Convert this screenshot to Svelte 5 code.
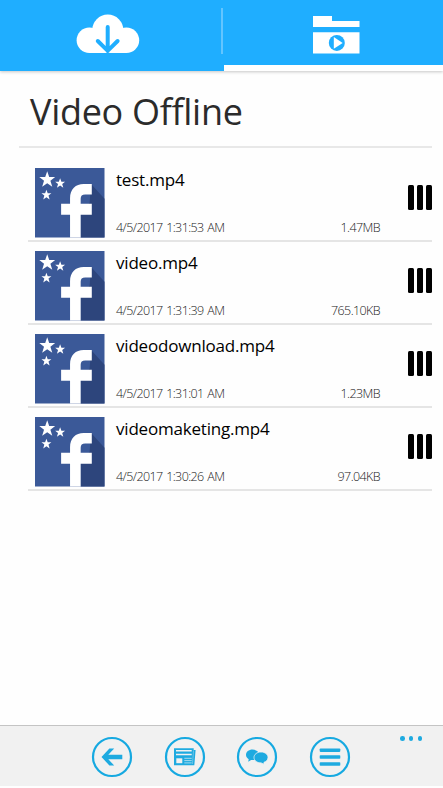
<script>
  let tab = $state('folder');
  let selected = $state(null);

  const files = [
    { name: 'test.mp4', date: '4/5/2017 1:31:53 AM', size: '1.47MB' },
    { name: 'video.mp4', date: '4/5/2017 1:31:39 AM', size: '765.10KB' },
    { name: 'videodownload.mp4', date: '4/5/2017 1:31:01 AM', size: '1.23MB' },
    { name: 'videomaketing.mp4', date: '4/5/2017 1:30:26 AM', size: '97.04KB' }
  ];
</script>

{#snippet thumb()}
  <svg class="thumb" width="70" height="70" viewBox="0 0 70 70" aria-hidden="true">
    <rect width="70" height="70" fill="#3b5998" />
    <path d="M56.5 16 70 31V70H46V47L55 35Z" fill="#2d457c" />
    <path d="M35.3 70V47H26.3V36H35.3V30.5C35.3 21 41 16 49 16H57.2V26.8H50.5C47.3 26.8 46 28.3 46 31V36H57.2V47H46V70Z" fill="#fff" />
    <path d="M12.3 3.2 14.3 9H20.3L15.5 12.8 17.4 19 12.3 15.3 7.2 19 9.1 12.8 4.3 9H10.3Z" fill="#fff" />
    <path d="M25.3 10.3 26.6 13.8H30.3L27.4 16.1 28.5 20 25.3 17.7 22.1 20 23.2 16.1 20.3 13.8H24Z" fill="#fff" />
    <path d="M11.5 22 12.8 25.5H16.5L13.6 27.8 14.7 31.7 11.5 29.4 8.3 31.7 9.4 27.8 6.5 25.5H10.2Z" fill="#fff" />
  </svg>
{/snippet}

<div class="app">
  <header class="tabs">
    <button class="tab" class:active={tab === 'cloud'} aria-label="Download" onclick={() => (tab = 'cloud')}>
      <svg class="cloud" width="64" height="40" viewBox="0 0 64 40">
        <g fill="#fff">
          <circle cx="13.4" cy="26.2" r="12.8" />
          <circle cx="31.8" cy="16.2" r="15.6" />
          <circle cx="50.4" cy="26.2" r="12.8" />
          <rect x="13.4" y="20" width="37" height="19" />
        </g>
        <path d="M31.7 13V37M21.8 27 31.7 36.8 41.6 27" fill="none" stroke="#1faeff" stroke-width="4" stroke-linecap="round" />
      </svg>
    </button>
    <button class="tab" class:active={tab === 'folder'} aria-label="Offline videos" onclick={() => (tab = 'folder')}>
      <svg class="folder" width="47" height="38" viewBox="0 0 47 38">
        <path d="M0 0H19V5H46.5V11H0Z" fill="#fff" />
        <path d="M0 16.3H46.5V37.5H0Z" fill="#fff" />
        <circle cx="23.8" cy="26.9" r="8" fill="#1faeff" />
        <path d="M20.8 21 29.7 26.9 20.8 32.8Z" fill="#fff" />
      </svg>
    </button>
  </header>

  <main>
    <h1>Video Offline</h1>
    <ul>
      {#each files as file}
        <li>
          {@render thumb()}
          <div class="info">
            <span class="name">{file.name}</span>
            <div class="meta">
              <span>{file.date}</span>
              <span class="size">{file.size}</span>
            </div>
          </div>
          <button class="more" aria-label="Options" onclick={() => (selected = file.name)}>
            <i></i><i></i><i></i>
          </button>
        </li>
      {/each}
    </ul>
  </main>

  <footer>
    <nav>
      <button aria-label="Back">
        <svg width="42" height="42" viewBox="0 0 42 42">
          <circle class="ring" cx="21" cy="21" r="19" />
          <path d="M10.5 21 18.4 12.5H23.2L17.3 18.8H31.3V23.2H17.3L23.2 29.5H18.4Z" />
        </svg>
      </button>
      <button aria-label="News">
        <svg width="42" height="42" viewBox="0 0 42 42">
          <circle class="ring" cx="21" cy="21" r="19" />
          <path d="M10 12.3H29.7V14H31.6L30.3 29.3H10Z" />
          <path d="M12 14.8H27.7M12 18.5H27.7" stroke="#f1f1f1" stroke-width="1.4" />
          <path d="M12.3 22.3H18.3V27.2H12.3Z" fill="#f1f1f1" />
          <path d="M20.3 22.3H27.7M20.3 24.6H27.7M20.3 26.9H27.7" stroke="#a5daee" stroke-width="1" />
          <path d="M29.5 14.5 28.5 28" stroke="#8bd0ea" stroke-width=".7" />
        </svg>
      </button>
      <button aria-label="Comments">
        <svg width="42" height="42" viewBox="0 0 42 42">
          <circle class="ring" cx="21" cy="21" r="19" />
          <path d="M16.5 13.5C12.8 13.5 10 15.8 10 18.8C10 20.8 11 22.3 12.7 23.2L12.2 25.7L15.1 24.1H19.5C22 23.4 23.2 21 23.2 18.8C23.2 15.8 20.2 13.5 16.5 13.5Z" />
          <path d="M25 16C20.9 16 18 18.4 18 21.5C18 24.7 21 26.9 25.2 26.9L27.8 28.2L28 26.3C30.5 25.5 32 23.8 32 21.5C32 18.4 29.1 16 25 16Z" stroke="#f1f1f1" stroke-width=".8" />
        </svg>
      </button>
      <button aria-label="Menu">
        <svg width="42" height="42" viewBox="0 0 42 42">
          <circle class="ring" cx="21" cy="21" r="19" />
          <rect x="10.7" y="12.4" width="20.6" height="3.5" rx=".8" />
          <rect x="10.7" y="19.3" width="20.6" height="3.5" rx=".8" />
          <rect x="10.7" y="26.2" width="20.6" height="3.5" rx=".8" />
        </svg>
      </button>
    </nav>
    <div class="dots"><i></i><i></i><i></i></div>
  </footer>
</div>

<style>
  :global(body) { margin: 0; background: #fff; }
  * { box-sizing: border-box; }
  .app {
    display: flex;
    flex-direction: column;
    width: 443px;
    height: 788px;
    overflow: hidden;
    padding-bottom: 2px;
    background: #fefefe;
    font-family: "Open Sans", "Noto Sans", sans-serif;
  }
  button { padding: 0; border: 0; background: none; cursor: pointer; }
  svg { display: block; }

  .tabs {
    display: flex;
    flex: none;
    height: 71px;
    background: #1faeff;
    box-shadow: 0 1px 3px rgba(0, 0, 0, .22);
  }
  .tab { display: flex; position: relative; width: 219px; border-bottom: 6px solid transparent; }
  .tab:first-child { width: 224px; }
  .tab:first-child::after {
    content: "";
    position: absolute;
    left: 221px;
    top: 8px;
    width: 2px;
    height: 46px;
    background: #63c5ff;
  }
  .tab.active { border-color: #fff; }
  .cloud { margin: 14px 0 0 76px; }
  .folder { margin: 15.5px 0 0 88.7px; }

  main { flex: 1; padding: 0 11px 0 19px; }
  h1 {
    height: 77px;
    margin: 0;
    padding: 16px 0 0 11px;
    border-bottom: 2px solid #e8e8e8;
    color: #2b2b2b;
    font-size: 36px;
    font-weight: 400;
    line-height: 50px;
    letter-spacing: -.3px;
    font-variant-ligatures: none;
    white-space: nowrap;
  }
  ul { margin: 11px 0 0 9px; padding: 0; list-style: none; }
  li {
    display: flex;
    height: 83px;
    padding: 9px 0 0 7px;
    border-bottom: 2px solid #e5e5e5;
  }
  .thumb { flex: none; width: 69.5px; height: 69.5px; }
  .info { flex: none; width: 264px; margin-left: 11.5px; }
  .name {
    display: block;
    height: 48px;
    color: #000;
    font-size: 17px;
    line-height: 24px;
    letter-spacing: -.2px;
  }
  .meta {
    display: flex;
    justify-content: space-between;
    color: #222;
    font-size: 12.5px;
    font-weight: 300;
    line-height: 24px;
    letter-spacing: -.6px;
    word-spacing: 1px;
  }
  .more { display: flex; gap: 3px; height: 25px; margin: 17px 0 0 auto; }
  .more i { width: 6px; height: 25px; border-radius: 1.5px; background: #000; }

  footer {
    display: flex;
    flex: none;
    align-items: flex-start;
    height: 61px;
    border-top: 1px solid #c4c4c4;
    background: #f1f1f1;
  }
  nav { display: flex; gap: 30.7px; margin: 9.5px 0 0 91px; }
  nav svg { fill: #1eaae0; }
  .ring { fill: none; stroke: #16a9e1; stroke-width: 2.2; }
  .dots { display: flex; gap: 4.2px; margin: 10px 0 0 49px; }
  .dots i { width: 4.6px; height: 4.6px; border-radius: 50%; background: #1eaae0; }
</style>
